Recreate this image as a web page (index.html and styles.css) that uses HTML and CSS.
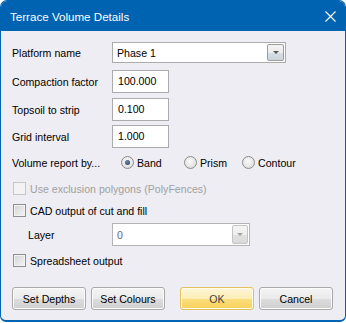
FILE: index.html
```html
<!DOCTYPE html>
<html lang="en">
<head>
    <meta charset="UTF-8">
    <title>Terrace Volume Details</title>
    <link rel="stylesheet" href="styles.css">
</head>
<body>
    <div class="window">
        <div class="titlebar">
            <span class="title">Terrace Volume Details</span>
            <svg class="close" width="11" height="11" viewBox="0 0 11 11">
                <path d="M0.5 0.5 L10.5 10.5 M10.5 0.5 L0.5 10.5" stroke="#fff" stroke-width="1.1" fill="none"/>
            </svg>
        </div>

        <div class="content">
            <div class="row r1">
                <span class="lbl">Platform name</span>
                <div class="combo combo-wide">
                    <span class="combo-text">Phase 1</span>
                    <span class="combo-btn"><i></i></span>
                </div>
            </div>

            <div class="row field r2">
                <span class="lbl">Compaction factor</span>
                <div class="textbox">100.000</div>
            </div>

            <div class="row field r3">
                <span class="lbl">Topsoil to strip</span>
                <div class="textbox">0.100</div>
            </div>

            <div class="row field r4">
                <span class="lbl">Grid interval</span>
                <div class="textbox">1.000</div>
            </div>

            <div class="row r5">
                <span class="lbl lbl-radio">Volume report by...</span>
                <span class="opt opt-band"><span class="radio on"></span>Band</span>
                <span class="opt opt-prism"><span class="radio"></span>Prism</span>
                <span class="opt"><span class="radio"></span>Contour</span>
            </div>

            <div class="row check r6 disabled">
                <span class="box"></span>Use exclusion polygons (PolyFences)
            </div>

            <div class="row check r7">
                <span class="box"></span>CAD output of cut and fill
            </div>

            <div class="row r8">
                <span class="lbl lbl-indent">Layer</span>
                <div class="combo combo-layer">
                    <span class="combo-text">0</span>
                    <span class="combo-btn"><i></i></span>
                </div>
            </div>

            <div class="row check r9">
                <span class="box"></span>Spreadsheet output
            </div>

            <div class="buttons">
                <button>Set Depths</button>
                <button>Set Colours</button>
                <button class="ok">OK</button>
                <button>Cancel</button>
            </div>
        </div>
    </div>
</body>
</html>
```

FILE: styles.css
```css
html, body {
    margin: 0;
    background: #fff;
}

body {
    font-family: 'Liberation Sans', Arial, sans-serif;
    font-size: 10.6px;
    color: #000;
}

.window {
    width: 346px;
    height: 322px;
    box-sizing: border-box;
    border: 1px solid #0063b1;
    border-bottom-width: 2px;
    border-radius: 7px 7px 6px 6px;
    background: #eeedf3;
    overflow: hidden;
}

.titlebar {
    height: 30px;
    background: #0063b1;
    display: flex;
    align-items: center;
    justify-content: space-between;
    padding: 0 9px 0 9px;
}

.title {
    color: #fff;
    font-size: 11.6px;
}

.close {
    display: block;
}

.content {
    padding: 0 11px;
}

.row {
    display: flex;
    align-items: center;
}

.lbl {
    flex: 0 0 100px;
}

.lbl-radio {
    flex-basis: 109px;
}

.lbl-indent {
    flex-basis: 84px;
    padding-left: 16px;
}

/* row positions */
.r1 { margin-top: 11px; height: 21px; }
.r2 { margin-top: 7px; height: 23px; }
.r3 { margin-top: 5px; height: 23px; }
.r4 { margin-top: 4px; height: 23px; }
.r5 { margin-top: 6px; height: 17px; }
.r6 { margin-top: 11px; height: 13px; }
.r7 { margin-top: 9px; height: 13px; }
.r8 { margin-top: 6px; height: 23px; }
.r9 { margin-top: 8px; height: 13px; }

.textbox {
    width: 57px;
    height: 23px;
    box-sizing: border-box;
    border: 1px solid #ababab;
    background: #fff;
    padding: 0 5px;
    line-height: 21px;
}

.combo {
    height: 21px;
    box-sizing: border-box;
    border: 1px solid #ababab;
    background: #fff;
    display: flex;
    align-items: center;
    justify-content: space-between;
    padding: 1px;
}

.combo-wide {
    width: 174px;
}

.combo-layer {
    width: 138px;
    height: 23px;
    border-color: #b4b4b4;
}

.combo-text {
    padding-left: 3px;
}

.combo-layer .combo-text {
    color: #6c6482;
}

.combo-btn {
    width: 17px;
    height: 17px;
    box-sizing: border-box;
    border: 1px solid #9c9c9c;
    border-radius: 2px;
    background: linear-gradient(#f4f4f4 0%, #ececec 50%, #d7dde5 51%, #cdd3db 100%);
    display: flex;
    align-items: center;
    justify-content: center;
}

.combo-layer .combo-btn {
    width: 16px;
    height: 19px;
    border-color: #c4c4c4;
    background: linear-gradient(#f4f4f4 0%, #eeeeee 50%, #e2e2e2 51%, #dadada 100%);
}

.combo-btn i {
    width: 0;
    height: 0;
    border-left: 3px solid transparent;
    border-right: 3px solid transparent;
    border-top: 3px solid #555;
}

.combo-layer .combo-btn i {
    border-top-color: #a0a0a0;
}

/* radio buttons */
.opt {
    display: flex;
    align-items: center;
    gap: 3px;
}

.opt-band { width: 63px; }
.opt-prism { width: 58px; }

.radio {
    width: 13px;
    height: 13px;
    box-sizing: border-box;
    border-radius: 50%;
    border: 1px solid #8c8c8c;
    background: radial-gradient(circle at 45% 40%, #fbfbfb 0%, #e4e4e4 60%, #cfcfcf 100%);
    display: flex;
    align-items: center;
    justify-content: center;
}

.radio.on::after {
    content: '';
    width: 5px;
    height: 5px;
    border-radius: 50%;
    background: radial-gradient(circle at 40% 35%, #6f86a8, #24385a);
}

/* check boxes */
.check {
    gap: 4px;
    padding-left: 1px;
}

.box {
    width: 13px;
    height: 13px;
    box-sizing: border-box;
    border: 1px solid #8e8f8f;
    background: linear-gradient(135deg, #d3d3d3, #f5f5f5);
    box-shadow: inset 0 0 0 1px #f2f2f2;
}

.disabled {
    color: #a0a0a0;
}

.disabled .box {
    border-color: #c7c7c7;
    background: #f3f3f5;
}

/* buttons */
.buttons {
    margin-top: 20px;
    display: flex;
    gap: 5px;
}

button {
    width: 74px;
    height: 23px;
    font-family: inherit;
    font-size: 10.6px;
    color: #000;
    border: 1px solid #a9a9a9;
    border-radius: 3px;
    background: linear-gradient(#f4f4f4 0%, #ebebeb 50%, #dddddd 51%, #cfcfcf 100%);
    box-shadow: inset 0 0 0 1px #fbfbfb;
    padding: 0;
}

button.ok {
    margin-left: 10px;
    color: #444;
    border-color: #e2c15f;
    background: linear-gradient(#fdf6d9 0%, #fceeb4 50%, #fbdd7c 51%, #f9d25c 100%);
    box-shadow: inset 0 0 0 1px #fffbea;
}
```
